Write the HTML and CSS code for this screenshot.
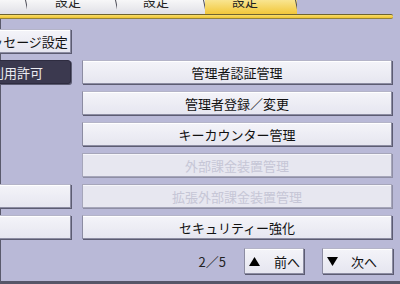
FILE: index.html
```html
<!DOCTYPE html>
<html lang="ja">
<head>
<meta charset="utf-8">
<link rel="stylesheet" href="styles.css">
</head>
<body>
<div class="tabs">
  <div class="tab tab-first"></div>
  <div class="tab tab-a"><span class="tab-label">設定</span></div>
  <div class="tab tab-b"><span class="tab-label">設定</span></div>
  <div class="tab tab-active"><span class="tab-label">設定</span></div>
</div>
<div class="bar"></div>
<div class="frame">
  <div class="grid">
    <div class="btn btn-left">メッセージ設定</div>
    <div></div>
    <div class="btn btn-left btn-dark">利用許可</div>
    <div class="btn">管理者認証管理</div>
    <div></div>
    <div class="btn">管理者登録／変更</div>
    <div></div>
    <div class="btn">キーカウンター管理</div>
    <div></div>
    <div class="btn btn-disabled">外部課金装置管理</div>
    <div class="btn btn-left"></div>
    <div class="btn btn-disabled">拡張外部課金装置管理</div>
    <div class="btn btn-left"></div>
    <div class="btn">セキュリティー強化</div>
  </div>
  <div class="pager">
    <span class="page">2／5</span>
    <div class="btn nav nav-prev">
      <svg class="tri" width="11" height="9" viewBox="0 0 11 9"><polygon points="5.5,0 11,9 0,9" fill="#000"/></svg>
      <span>前へ</span>
    </div>
    <div class="btn nav nav-next">
      <svg class="tri" width="11" height="9" viewBox="0 0 11 9"><polygon points="0,0 11,0 5.5,9" fill="#000"/></svg>
      <span>次へ</span>
    </div>
  </div>
</div>
</body>
</html>
```
FILE: styles.css
```css
* { box-sizing: border-box; }
html, body { margin: 0; padding: 0; }
body {
  width: 400px;
  height: 284px;
  overflow: hidden;
  background: #b9b9d7;
  font-family: "Noto Sans CJK JP", "Noto Sans", sans-serif;
  font-size: 13px;
  color: #111;
}
.tabs {
  display: flex;
  height: 14px;
}
.tab {
  position: relative;
  height: 14px;
  overflow: hidden;
  background: linear-gradient(#f7f7f8, #e0e0e6);
  line-height: 13px;
  padding-left: 27px;
}
.tab::after {
  content: "";
  position: absolute;
  right: 1px;
  top: 0;
  width: 1px;
  height: 15px;
  background: #4a4a55;
  transform: skewX(12deg);
  transform-origin: top;
}
.tab-first { width: 27px; }
.tab-a { width: 90px; padding-left: 28px; }
.tab-b { width: 88px; padding-left: 26px; }
.tab-active {
  width: 92px;
  background: linear-gradient(#f9e590, #f2c73a);
}
.tab-label {
  display: block;
  margin-top: -6px;
  color: #222;
}
.bar {
  width: 393px;
  height: 5px;
  border-top: 1px solid #6f6330;
  border-bottom: 1px solid #948238;
  background: linear-gradient(#f8df6c, #eec232);
  border-radius: 0 2px 2px 0;
}
.frame {
  height: 265px;
  border-left: 1px solid #5a5a6c;
  border-bottom: 3px solid #565668;
  padding-top: 10px;
}
.grid {
  display: grid;
  grid-template-columns: 70px 310px;
  grid-template-rows: repeat(7, 24px);
  column-gap: 11px;
  row-gap: 7px;
}
.btn {
  display: flex;
  align-items: center;
  justify-content: center;
  white-space: nowrap;
  background: linear-gradient(#f4f4f9, #e6e6f0);
  border: 1px solid #8c8ca2;
  border-top-color: #b4b4c8;
  box-shadow: 1px 1px 0 #5c5c72, inset 0 1px 0 #ffffff;
  color: #111;
  line-height: 1;
  overflow: hidden;
}
.btn-left {
  margin-left: -27px;
}
.btn-dark {
  justify-content: flex-start;
  padding-left: 16px;
  background: #3b394f;
  border-color: #2e2c40;
  box-shadow: 1px 1px 0 #5c5c72;
  color: #ececf2;
  border-radius: 3px;
}
.btn-disabled {
  color: #c6c6d6;
  background: #e7e7f0;
  border-color: #a6a6ba;
  box-shadow: 1px 1px 0 #8e8ea4, inset 0 1px 0 #f6f6fa;
}
.pager {
  display: flex;
  justify-content: flex-end;
  align-items: center;
  margin-top: 9px;
  width: 392px;
  height: 26px;
}
.page {
  margin-right: 18px;
  color: #222;
}
.nav {
  height: 26px;
  justify-content: flex-start;
  padding-left: 4px;
}
.nav-prev {
  width: 60px;
  margin-right: 18px;
  gap: 14px;
}
.nav-next {
  width: 71px;
  gap: 13px;
}
.tri { flex: none; }
```
